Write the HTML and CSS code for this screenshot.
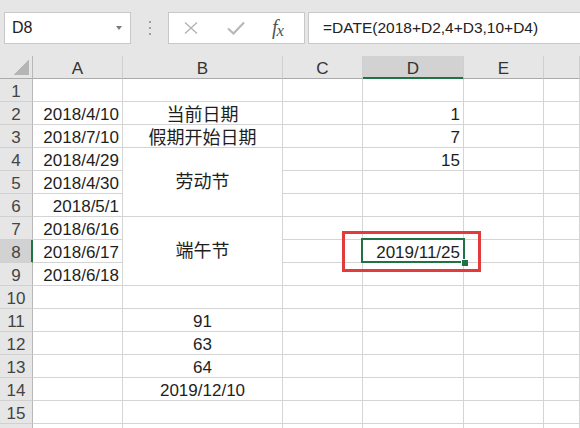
FILE: index.html
```html
<!DOCTYPE html>
<html lang="zh-CN">
<head>
<meta charset="utf-8">
<title>Excel DATE</title>
<link rel="stylesheet" href="styles.css">
</head>
<body>
<div class="app">
  <div class="toolbar">
    <div class="namebox"><span class="name">D8</span><span class="caret"></span></div>
    <div class="grip"><i></i><i></i><i></i></div>
    <div class="fxbox">
      <svg class="ico-x" width="14" height="12" viewBox="0 0 14 12"><path d="M1 0.5 L13 11.5 M13 0.5 L1 11.5" stroke="#b4b4b4" stroke-width="1.4" fill="none"/></svg>
      <svg class="ico-ok" width="18" height="14" viewBox="0 0 18 14"><path d="M1 7.5 L6.5 12.5 L17 1.5" stroke="#b8b8b8" stroke-width="2.2" fill="none"/></svg>
      <span class="fx"><span class="fx-f">f</span><span class="fx-x">x</span></span>
    </div>
    <div class="formula">=DATE(2018+D2,4+D3,10+D4)</div>
  </div>
  <div class="sheet">
    <div class="corner"></div><div class="ch">A</div><div class="ch">B</div><div class="ch">C</div><div class="ch ch-sel">D</div><div class="ch">E</div><div class="ch"></div>

    <div class="rh">1</div><div class="cell"></div><div class="cell"></div><div class="cell"></div><div class="cell"></div><div class="cell"></div><div class="cell"></div>
    <div class="rh">2</div><div class="cell r">2018/4/10</div><div class="cell c cjk">当前日期</div><div class="cell"></div><div class="cell r">1</div><div class="cell"></div><div class="cell"></div>
    <div class="rh">3</div><div class="cell r">2018/7/10</div><div class="cell c cjk">假期开始日期</div><div class="cell"></div><div class="cell r">7</div><div class="cell"></div><div class="cell"></div>
    <div class="rh">4</div><div class="cell r">2018/4/29</div><div class="cell merged cjk">劳动节</div><div class="cell"></div><div class="cell r">15</div><div class="cell"></div><div class="cell"></div>
    <div class="rh">5</div><div class="cell r">2018/4/30</div><div class="cell"></div><div class="cell"></div><div class="cell"></div><div class="cell"></div>
    <div class="rh">6</div><div class="cell r">2018/5/1</div><div class="cell"></div><div class="cell"></div><div class="cell"></div><div class="cell"></div>
    <div class="rh">7</div><div class="cell r">2018/6/16</div><div class="cell merged cjk">端午节</div><div class="cell"></div><div class="cell"></div><div class="cell"></div><div class="cell"></div>
    <div class="rh rh-sel">8</div><div class="cell r">2018/6/17</div><div class="cell"></div><div class="cell r active">2019/11/25<span class="handle"></span><span class="mark"></span></div><div class="cell"></div><div class="cell"></div>
    <div class="rh">9</div><div class="cell r">2018/6/18</div><div class="cell"></div><div class="cell"></div><div class="cell"></div><div class="cell"></div>
    <div class="rh">10</div><div class="cell"></div><div class="cell"></div><div class="cell"></div><div class="cell"></div><div class="cell"></div><div class="cell"></div>
    <div class="rh">11</div><div class="cell"></div><div class="cell c">91</div><div class="cell"></div><div class="cell"></div><div class="cell"></div><div class="cell"></div>
    <div class="rh">12</div><div class="cell"></div><div class="cell c">63</div><div class="cell"></div><div class="cell"></div><div class="cell"></div><div class="cell"></div>
    <div class="rh">13</div><div class="cell"></div><div class="cell c">64</div><div class="cell"></div><div class="cell"></div><div class="cell"></div><div class="cell"></div>
    <div class="rh">14</div><div class="cell"></div><div class="cell c">2019/12/10</div><div class="cell"></div><div class="cell"></div><div class="cell"></div><div class="cell"></div>
    <div class="rh">15</div><div class="cell"></div><div class="cell"></div><div class="cell"></div><div class="cell"></div><div class="cell"></div><div class="cell"></div>
    <div class="rh"></div><div class="cell"></div><div class="cell"></div><div class="cell"></div><div class="cell"></div><div class="cell"></div><div class="cell"></div>
  </div>
</div>
</body>
</html>
```

FILE: styles.css
```css
* { box-sizing: border-box; }
html, body {
  margin: 0;
  padding: 0;
  background: #ffffff;
  overflow: hidden;
}
body {
  font-family: "Liberation Sans", "Noto Sans CJK SC", sans-serif;
  color: #1e1e1e;
  width: 580px;
  height: 428px;
}
.app {
  width: 580px;
  height: 428px;
  overflow: hidden;
}

/* ---------- top formula bar ---------- */
.toolbar {
  height: 56px;
  background: #e6e6e6;
  display: flex;
  align-items: flex-start;
  padding: 12px 0 0 4px;
  overflow: hidden;
}
.namebox {
  width: 127px;
  height: 32px;
  background: #ffffff;
  border: 1px solid #c8c8c8;
  display: flex;
  align-items: center;
  padding-left: 7px;
}
.name {
  font-size: 16px;
  line-height: 30px;
  color: #222;
}
.caret {
  margin-left: auto;
  margin-right: 8px;
  width: 0;
  height: 0;
  border-left: 3.5px solid transparent;
  border-right: 3.5px solid transparent;
  border-top: 4px solid #7a7a7a;
}
.grip {
  width: 37px;
  height: 32px;
  display: flex;
  flex-direction: column;
  align-items: center;
  justify-content: center;
  gap: 4px;
}
.grip i {
  display: block;
  width: 2px;
  height: 2px;
  background: #a0a0a0;
}
.fxbox {
  width: 137px;
  height: 32px;
  background: #ffffff;
  border: 1px solid #c8c8c8;
  display: flex;
  align-items: center;
  padding-left: 15px;
}
.ico-x { display: block; }
.ico-ok { display: block; margin-left: 29px; }
.fx {
  margin-left: 27px;
  font-family: "Liberation Serif", "DejaVu Serif", serif;
  font-style: italic;
  color: #555;
  font-size: 20px;
  line-height: 30px;
  letter-spacing: -1px;
}
.fx-x {
  font-size: 17px;
  position: relative;
  top: 2px;
}
.formula {
  flex: 1;
  margin-left: 3px;
  margin-right: -4px;
  height: 32px;
  background: #ffffff;
  border: 1px solid #c8c8c8;
  padding-left: 14px;
  font-size: 15.5px;
  line-height: 30px;
  color: #222;
  white-space: nowrap;
}

/* ---------- sheet grid ---------- */
.sheet {
  display: grid;
  grid-template-columns: 33px 90px 160px 80px 101px 80px 1fr;
  grid-auto-rows: 23px;
}
.corner {
  background-color: #e6e6e6;
  border-right: 1px solid #b8b8b8;
  border-bottom: 1px solid #ababab;
  background-image: linear-gradient(to bottom right, transparent 50%, #b5b5b5 50%);
  background-size: 16px 15px;
  background-position: right 3px bottom 3px;
  background-repeat: no-repeat;
}
.ch {
  background: #e6e6e6;
  border-right: 1px solid #cfcfcf;
  border-bottom: 1px solid #ababab;
  text-align: center;
  font-size: 17px;
  line-height: 18px;
  padding-top: 4px;
  color: #333;
}
.ch-sel {
  background: #d2d2d2;
  border-bottom-color: #217346;
  box-shadow: inset 0 -1px 0 #217346;
}
.rh {
  background: #e6e6e6;
  border-right: 1px solid #b8b8b8;
  border-bottom: 1px solid #d0d0d0;
  text-align: center;
  font-size: 17px;
  line-height: 18px;
  padding-top: 4px;
  color: #444;
}
.rh-sel {
  background: #d2d2d2;
  border-right-color: #217346;
  box-shadow: inset -1px 0 0 #217346;
}
.cell {
  border-right: 1px solid #d4d4d4;
  border-bottom: 1px solid #d4d4d4;
  font-size: 17px;
  line-height: 18px;
  padding: 4px 3px 0;
  white-space: nowrap;
  color: #1e1e1e;
}
.cjk { font-size: 18px; }
.r { text-align: right; }
.c { text-align: center; }
.merged {
  grid-row: span 3;
  display: flex;
  align-items: center;
  justify-content: center;
  padding: 0 3px;
}

/* active cell D8 */
.active { position: relative; }
.active::before {
  content: "";
  position: absolute;
  left: -2px;
  top: -2px;
  right: -2px;
  bottom: -1px;
  border: 2px solid #217346;
}
.handle {
  position: absolute;
  right: -5px;
  bottom: -4px;
  width: 7px;
  height: 7px;
  background: #217346;
  border: 1px solid #ffffff;
  border-right: none;
  border-bottom: none;
}
/* red annotation rectangle */
.mark {
  position: absolute;
  left: -21px;
  top: -9px;
  width: 139px;
  height: 41px;
  border: 3px solid #e23b3b;
}
```
